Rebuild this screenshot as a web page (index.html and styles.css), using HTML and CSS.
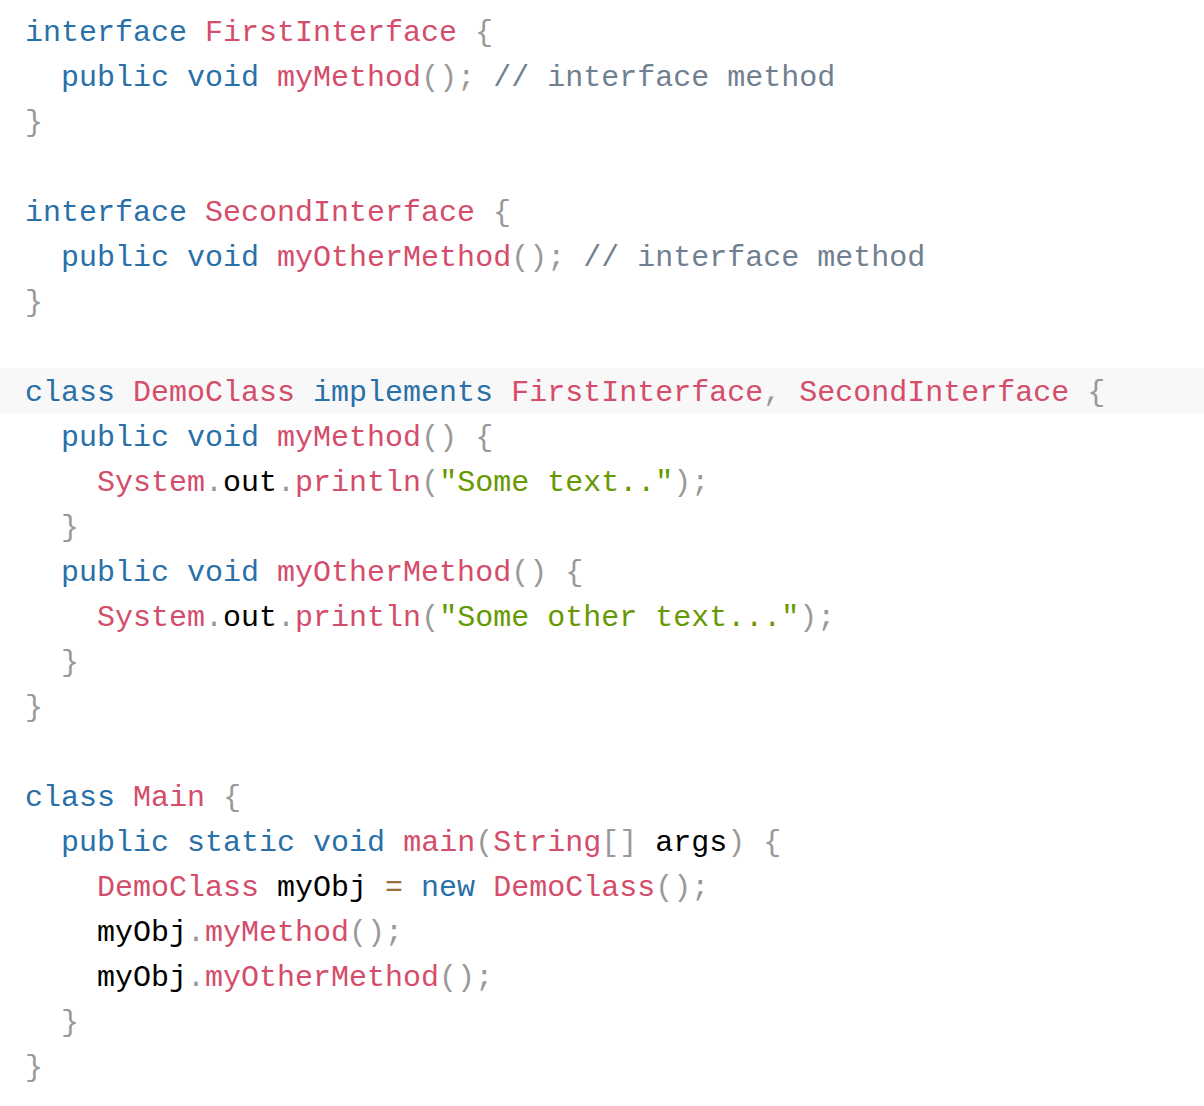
FILE: index.html
```html
<!DOCTYPE html>
<html>
<head>
<meta charset="utf-8">
<link rel="stylesheet" href="styles.css">
</head>
<body>
<div class="code">
<div class="ln"><span class="kw">interface</span> <span class="cn">FirstInterface</span> <span class="p">{</span></div>
<div class="ln">  <span class="kw">public</span> <span class="kw">void</span> <span class="fn">myMethod</span><span class="p">(</span><span class="p">)</span><span class="p">;</span> <span class="cm">// interface method</span></div>
<div class="ln"><span class="p">}</span></div>
<div class="ln"> </div>
<div class="ln"><span class="kw">interface</span> <span class="cn">SecondInterface</span> <span class="p">{</span></div>
<div class="ln">  <span class="kw">public</span> <span class="kw">void</span> <span class="fn">myOtherMethod</span><span class="p">(</span><span class="p">)</span><span class="p">;</span> <span class="cm">// interface method</span></div>
<div class="ln"><span class="p">}</span></div>
<div class="ln"> </div>
<div class="ln hl"><span class="kw">class</span> <span class="cn">DemoClass</span> <span class="kw">implements</span> <span class="cn">FirstInterface</span><span class="p">,</span> <span class="cn">SecondInterface</span> <span class="p">{</span></div>
<div class="ln">  <span class="kw">public</span> <span class="kw">void</span> <span class="fn">myMethod</span><span class="p">(</span><span class="p">)</span> <span class="p">{</span></div>
<div class="ln">    <span class="cn">System</span><span class="p">.</span>out<span class="p">.</span><span class="fn">println</span><span class="p">(</span><span class="str">"Some text.."</span><span class="p">)</span><span class="p">;</span></div>
<div class="ln">  <span class="p">}</span></div>
<div class="ln">  <span class="kw">public</span> <span class="kw">void</span> <span class="fn">myOtherMethod</span><span class="p">(</span><span class="p">)</span> <span class="p">{</span></div>
<div class="ln">    <span class="cn">System</span><span class="p">.</span>out<span class="p">.</span><span class="fn">println</span><span class="p">(</span><span class="str">"Some other text..."</span><span class="p">)</span><span class="p">;</span></div>
<div class="ln">  <span class="p">}</span></div>
<div class="ln"><span class="p">}</span></div>
<div class="ln"> </div>
<div class="ln"><span class="kw">class</span> <span class="cn">Main</span> <span class="p">{</span></div>
<div class="ln">  <span class="kw">public</span> <span class="kw">static</span> <span class="kw">void</span> <span class="fn">main</span><span class="p">(</span><span class="cn">String</span><span class="p">[</span><span class="p">]</span> args<span class="p">)</span> <span class="p">{</span></div>
<div class="ln">    <span class="cn">DemoClass</span> myObj <span class="op">=</span> <span class="kw">new</span> <span class="cn">DemoClass</span><span class="p">(</span><span class="p">)</span><span class="p">;</span></div>
<div class="ln">    myObj<span class="p">.</span><span class="fn">myMethod</span><span class="p">(</span><span class="p">)</span><span class="p">;</span></div>
<div class="ln">    myObj<span class="p">.</span><span class="fn">myOtherMethod</span><span class="p">(</span><span class="p">)</span><span class="p">;</span></div>
<div class="ln">  <span class="p">}</span></div>
<div class="ln"><span class="p">}</span></div>
</div>
</body>
</html>
```

FILE: styles.css
```css
html, body {
  margin: 0;
  padding: 0;
  background: #ffffff;
}

.code {
  padding-top: 8px;
  font-family: "Liberation Mono", "DejaVu Sans Mono", monospace;
  font-size: 30px;
  color: #000000;
}

.ln {
  height: 39px;
  line-height: 39px;
  padding-top: 6px;
  padding-left: 25px;
  white-space: pre;
}

.hl {
  background: #f8f8f8;
}

.kw { color: #2a70a8; }
.cn { color: #d44d6a; }
.fn { color: #d44d6a; }
.p { color: #999999; }
.str { color: #669900; }
.op { color: #9a6e3a; }
.cm { color: #708090; }
```
